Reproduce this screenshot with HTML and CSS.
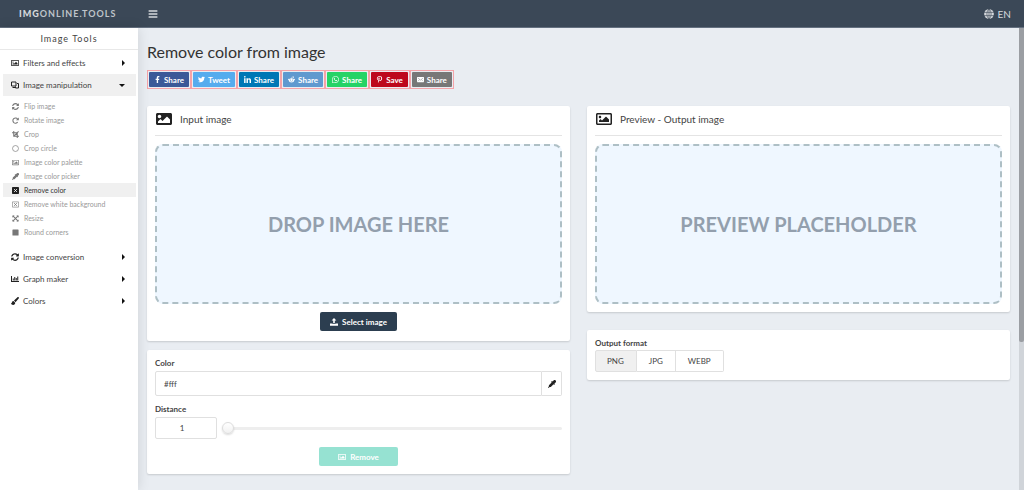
FILE: index.html
```html
<!DOCTYPE html>
<html lang="en">
<head>
<meta charset="utf-8">
<title>Remove color from image</title>
<link rel="stylesheet" href="styles.css">
</head>
<body>
<svg class="sprite" aria-hidden="true">
  <symbol id="image" viewBox="0 0 512 512"><path d="M464 64H48C21.49 64 0 85.49 0 112v288c0 26.51 21.49 48 48 48h416c26.51 0 48-21.49 48-48V112c0-26.51-21.49-48-48-48zm-6 336H54a6 6 0 0 1-6-6V118a6 6 0 0 1 6-6h404a6 6 0 0 1 6 6v276a6 6 0 0 1-6 6zM128 152c-22.091 0-40 17.909-40 40s17.909 40 40 40 40-17.909 40-40-17.909-40-40-40zM96 352h320v-80l-87.515-87.515c-4.686-4.686-12.284-4.686-16.971 0L192 304l-39.515-39.515c-4.686-4.686-12.284-4.686-16.971 0L96 304v48z"/></symbol>
  <symbol id="image-solid" viewBox="0 0 512 512"><path d="M464 448H48c-26.51 0-48-21.49-48-48V112c0-26.51 21.49-48 48-48h416c26.51 0 48 21.49 48 48v288c0 26.51-21.49 48-48 48zM112 120c-30.928 0-56 25.072-56 56s25.072 56 56 56 56-25.072 56-56-25.072-56-56-56zM64 384h384V272l-87.515-87.515c-4.686-4.686-12.284-4.686-16.971 0L208 320l-55.515-55.515c-4.686-4.686-12.284-4.686-16.971 0L64 336v48z"/></symbol>
  <symbol id="layers" viewBox="0 0 16 16"><path fill="none" stroke="currentColor" stroke-width="2" d="M1 2h9v8H1zM3 13h5M12 5h3v9H9v-3"/></symbol>
  <symbol id="sync" viewBox="0 0 512 512"><path d="M370.72 133.28C339.458 104.008 298.888 87.962 255.848 88c-77.458.068-144.328 53.178-162.791 126.85-1.344 5.363-6.122 9.15-11.651 9.15H24.103c-7.498 0-13.194-6.807-11.807-14.176C33.933 94.924 134.813 8 256 8c66.448 0 126.791 26.136 171.315 68.685L463.03 40.97C478.149 25.851 504 36.559 504 57.941V192c0 13.255-10.745 24-24 24H345.941c-21.382 0-32.09-25.851-16.971-40.971l41.75-41.749zM32 296h134.059c21.382 0 32.09 25.851 16.971 40.971l-41.75 41.75c31.262 29.273 71.835 45.319 114.876 45.28 77.418-.07 144.315-53.144 162.787-126.849 1.344-5.363 6.122-9.15 11.651-9.15h57.304c7.498 0 13.194 6.807 11.807 14.176C478.067 417.076 377.187 504 256 504c-66.448 0-126.791-26.136-171.315-68.685L48.97 471.03C33.851 486.149 8 475.441 8 454.059V320c0-13.255 10.745-24 24-24z"/></symbol>
  <symbol id="rotate" viewBox="0 0 16 16"><path fill="none" stroke="currentColor" stroke-width="2.4" d="M12.8 4.5A6 6 0 1 0 13 11.5"/><path d="M15.500 1v6.500H9z"/></symbol>
  <symbol id="crop" viewBox="0 0 16 16"><path fill="none" stroke="currentColor" stroke-width="2.4" d="M0 4h12v12M4 0v12h12M5 11L15 1"/></symbol>
  <symbol id="circle" viewBox="0 0 16 16"><circle cx="8" cy="8" r="6.800" fill="none" stroke="currentColor" stroke-width="1.500"/></symbol>
  <symbol id="dropper" viewBox="0 0 16 16"><path d="M15.200.8a2.800 2.800 0 0 0-4 0L8.800 3.200l-1-1-1.600 1.600 1.100 1.100-5.500 5.500v2.300L0 14.800 1.200 16l2.100-1.800h2.300l5.500-5.500 1.100 1.100 1.600-1.600-1-1 2.400-2.400a2.800 2.800 0 0 0 .1-4z"/></symbol>
  <symbol id="box-x" viewBox="0 0 16 16"><rect width="16" height="16" rx="1.500"/><path stroke="#fff" stroke-width="2.200" d="M5 5l6 6M11 5l-6 6"/></symbol>
  <symbol id="box-x-line" viewBox="0 0 16 16"><path fill="none" stroke="currentColor" stroke-width="1.400" d="M1 2h14v12H1z"/><path stroke="currentColor" stroke-width="2" d="M5 5l6 6M11 5l-6 6"/></symbol>
  <symbol id="resize" viewBox="0 0 16 16"><path d="M1 1h5L1 6zM15 1v5l-5-5zM1 15v-5l5 5zM15 15h-5l5-5z"/><path stroke="currentColor" stroke-width="2.400" d="M2 2l12 12M14 2L2 14"/></symbol>
  <symbol id="square" viewBox="0 0 16 16"><rect x="1" y="1" width="14" height="14" rx="1"/></symbol>
  <symbol id="chart" viewBox="0 0 16 16"><path d="M0 2h2v10h14v2H0zM3.500 7h2v4h-2zM6.500 4h2v7h-2zM9.500 6h2v5h-2zM12.500 3h2v8h-2z"/></symbol>
  <symbol id="brush" viewBox="0 0 16 16"><path d="M14.200.2c-.7 0-1.200.3-1.700.7L6 7.100l3 3.200 6.400-7.200c.4-.5.600-.9.600-1.400 0-.9-.8-1.500-1.800-1.500zM5 8.100c-2.500.1-3 1.900-3.200 3.100-.2 1.200-.7 1.700-1.800 1.500.4 2 2.300 3.100 4.300 3.100 2.500 0 4.200-1.700 4.100-4.300z"/></symbol>
  <symbol id="bars" viewBox="0 0 16 16"><path d="M1 2h14v2.400H1zM1 6.800h14v2.400H1zM1 11.600h14V14H1z"/></symbol>
  <symbol id="globe" viewBox="0 0 16 16"><circle cx="8" cy="8" r="7.800"/><path fill="none" stroke="#3b4857" stroke-width="1" d="M0 5.400h16M0 10.600h16M8 0v16M8 0C3.500 4 3.500 12 8 16M8 0c4.500 4 4.500 12 0 16"/></symbol>
  <symbol id="upload" viewBox="0 0 16 16"><path d="M8 0l4.800 5H9.600v5.500H6.400V5H3.200zM0 11h5.200v1.200h5.600V11H16v4.500H0z"/></symbol>
  <symbol id="facebook" viewBox="0 0 320 512"><path d="M279.140 288l14.220-92.660h-88.910v-60.130c0-25.350 12.420-50.060 52.240-50.060h40.420V6.260S260.430 0 225.360 0c-73.220 0-121.080 44.380-121.080 124.720v70.620H22.890V288h81.390v224h100.170V288z"/></symbol>
  <symbol id="twitter" viewBox="0 0 512 512"><path d="M459.370 151.716c.325 4.548.325 9.097.325 13.645 0 138.720-105.583 298.558-298.558 298.558-59.452 0-114.680-17.219-161.137-47.106 8.447.974 16.568 1.299 25.340 1.299 49.055 0 94.213-16.568 130.274-44.832-46.132-.975-84.792-31.188-98.112-72.772 6.498.974 12.995 1.624 19.818 1.624 9.421 0 18.843-1.300 27.614-3.573-48.081-9.747-84.143-51.980-84.143-102.985v-1.299c13.969 7.797 30.214 12.670 47.431 13.319-28.264-18.843-46.781-51.005-46.781-87.391 0-19.492 5.197-37.360 14.294-52.954 51.655 63.675 129.300 105.258 216.365 109.807-1.624-7.797-2.599-15.918-2.599-24.040 0-57.828 46.782-104.934 104.934-104.934 30.213 0 57.502 12.670 76.670 33.137 23.715-4.548 46.456-13.320 66.599-25.340-7.798 24.366-24.366 44.833-46.132 57.827 21.117-2.273 41.584-8.122 60.426-16.243-14.292 20.791-32.161 39.308-52.628 54.253z"/></symbol>
  <symbol id="linkedin" viewBox="0 0 448 448"><path d="M100.280 448H7.400V148.900h92.880zM53.790 108.100C24.090 108.100 0 83.500 0 53.800a53.790 53.790 0 0 1 107.580 0c0 29.700-24.100 54.300-53.790 54.300zM447.900 448h-92.680V302.400c0-34.700-.7-79.200-48.290-79.200-48.290 0-55.690 37.700-55.690 76.700V448h-92.780V148.900h89.080v40.800h1.300c12.400-23.500 42.690-48.300 87.880-48.300 94 0 111.280 61.900 111.280 142.300V448z"/></symbol>
  <symbol id="reddit" viewBox="0 0 16 16"><ellipse cx="8" cy="10" rx="6" ry="4.600"/><circle cx="1.900" cy="7.800" r="1.700"/><circle cx="14.100" cy="7.800" r="1.700"/><circle cx="12.500" cy="2.500" r="1.400"/><path fill="none" stroke="currentColor" stroke-width="1" d="M8 6l1-4 3 .6"/><circle cx="5.700" cy="9" r="1.200" fill="#5f99cf"/><circle cx="10.300" cy="9" r="1.200" fill="#5f99cf"/><path fill="none" stroke="#5f99cf" d="M5.500 12q2.500 1.500 5 0"/></symbol>
  <symbol id="whatsapp" viewBox="0 32 448 448"><path d="M380.900 97.100C339 55.100 283.200 32 223.900 32c-122.400 0-222 99.600-222 222 0 39.100 10.200 77.300 29.600 111L0 480l117.700-30.900c32.400 17.700 68.900 27 106.100 27h.1c122.300 0 224.100-99.600 224.100-222 0-59.300-25.200-115-67.100-157zm-157 341.600c-33.200 0-65.700-8.900-94-25.700l-6.700-4-69.800 18.300L72 359.200l-4.400-7c-18.500-29.400-28.200-63.300-28.200-98.200 0-101.700 82.800-184.500 184.600-184.500 49.300 0 95.600 19.200 130.400 54.100 34.800 34.900 56.200 81.200 56.100 130.500 0 101.800-84.900 184.600-186.600 184.600zm101.200-138.200c-5.500-2.800-32.800-16.200-37.900-18-5.100-1.900-8.800-2.800-12.500 2.800-3.700 5.600-14.300 18-17.600 21.800-3.200 3.700-6.500 4.200-12 1.400-32.600-16.300-54-29.100-75.500-66-5.700-9.800 5.700-9.100 16.300-30.300 1.800-3.700.9-6.900-.5-9.700-1.400-2.800-12.500-30.100-17.100-41.200-4.500-10.800-9.100-9.300-12.500-9.500-3.200-.2-6.900-.2-10.600-.2-3.700 0-9.700 1.400-14.800 6.900-5.100 5.600-19.400 19-19.400 46.300 0 27.300 19.900 53.700 22.600 57.400 2.800 3.700 39.100 59.700 94.800 83.800 35.200 15.200 49 16.500 66.600 13.900 10.700-1.600 32.800-13.400 37.400-26.400 4.600-13 4.600-24.100 3.200-26.400-1.300-2.500-5-3.900-10.500-6.600z"/></symbol>
  <symbol id="pinterest" viewBox="0 0 384 512"><path d="M204 6.500C101.400 6.500 0 74.900 0 185.600 0 256 39.600 296 63.600 296c9.900 0 15.600-27.600 15.600-35.400 0-9.300-23.700-29.100-23.700-67.800 0-80.400 61.200-137.400 140.400-137.400 68.100 0 118.500 38.700 118.500 109.800 0 53.100-21.300 152.700-90.300 152.700-24.900 0-46.200-18-46.200-43.800 0-37.800 26.400-74.400 26.400-113.400 0-66.200-93.900-54.200-93.900 25.800 0 16.800 2.100 35.400 9.600 50.700-13.800 59.400-42 147.900-42 209.100 0 18.900 2.700 37.500 4.500 56.400 3.400 3.800 1.700 3.400 6.900 1.500 50.400-69 48.600-82.500 71.400-172.800 12.300 23.400 44.100 36 69.300 36 106.200 0 153.900-103.500 153.900-196.800C384 71.300 298.200 6.500 204 6.500z"/></symbol>
  <symbol id="mail" viewBox="0 0 16 16"><rect y="2" width="16" height="12" rx="1"/><path fill="none" stroke="#777" stroke-width="1" d="M2 4.500l6 5 6-5M2 12l4-4M14 12l-4-4"/></symbol>
</svg>

<header class="topbar">
  <a class="logo" href="#"><b>IMG</b>ONLINE.TOOLS</a>
  <button class="menu-button" type="button" aria-label="Toggle menu"><svg class="icon icon-md"><use href="#bars"/></svg></button>
  <button class="language" type="button"><svg class="icon icon-md"><use href="#globe"/></svg>EN</button>
</header>

<div class="shell">
  <nav class="sidebar">
    <div class="sidebar-title">Image Tools</div>
    <a class="group" href="#"><svg class="icon"><use href="#image"/></svg>Filters and effects<span class="caret"></span></a>
    <a class="group open" href="#"><svg class="icon"><use href="#layers"/></svg>Image manipulation<span class="caret down"></span></a>
    <div class="tools">
      <a class="tool" href="#"><svg class="icon icon-sm"><use href="#sync"/></svg>Flip image</a>
      <a class="tool" href="#"><svg class="icon icon-sm"><use href="#rotate"/></svg>Rotate image</a>
      <a class="tool" href="#"><svg class="icon icon-sm"><use href="#crop"/></svg>Crop</a>
      <a class="tool" href="#"><svg class="icon icon-sm"><use href="#circle"/></svg>Crop circle</a>
      <a class="tool" href="#"><svg class="icon icon-sm"><use href="#image"/></svg>Image color palette</a>
      <a class="tool" href="#"><svg class="icon icon-sm"><use href="#dropper"/></svg>Image color picker</a>
      <a class="tool active" href="#"><svg class="icon icon-sm"><use href="#box-x"/></svg>Remove color</a>
      <a class="tool" href="#"><svg class="icon icon-sm"><use href="#box-x-line"/></svg>Remove white background</a>
      <a class="tool" href="#"><svg class="icon icon-sm"><use href="#resize"/></svg>Resize</a>
      <a class="tool" href="#"><svg class="icon icon-sm"><use href="#square"/></svg>Round corners</a>
    </div>
    <a class="group" href="#"><svg class="icon"><use href="#sync"/></svg>Image conversion<span class="caret"></span></a>
    <a class="group" href="#"><svg class="icon"><use href="#chart"/></svg>Graph maker<span class="caret"></span></a>
    <a class="group" href="#"><svg class="icon"><use href="#brush"/></svg>Colors<span class="caret"></span></a>
  </nav>

  <main class="content">
    <h1 class="page-title">Remove color from image</h1>
    <div class="shares">
      <span class="share-slot"><a class="share facebook" href="#"><svg class="icon icon-sm"><use href="#facebook"/></svg>Share</a></span>
      <span class="share-slot"><a class="share twitter" href="#"><svg class="icon icon-sm"><use href="#twitter"/></svg>Tweet</a></span>
      <span class="share-slot"><a class="share linkedin" href="#"><svg class="icon icon-sm"><use href="#linkedin"/></svg>Share</a></span>
      <span class="share-slot"><a class="share reddit" href="#"><svg class="icon icon-sm"><use href="#reddit"/></svg>Share</a></span>
      <span class="share-slot"><a class="share whatsapp" href="#"><svg class="icon icon-sm"><use href="#whatsapp"/></svg>Share</a></span>
      <span class="share-slot"><a class="share pinterest" href="#"><svg class="icon icon-sm"><use href="#pinterest"/></svg>Save</a></span>
      <span class="share-slot"><a class="share mail" href="#"><svg class="icon icon-sm"><use href="#mail"/></svg>Share</a></span>
    </div>

    <div class="columns">
      <div class="column">
        <section class="card">
          <h2 class="card-title"><svg class="icon icon-lg"><use href="#image-solid"/></svg>Input image</h2>
          <div class="drop">DROP IMAGE HERE</div>
          <button class="button primary" type="button"><svg class="icon"><use href="#upload"/></svg>Select image</button>
        </section>
        <section class="card">
          <label class="label" for="color">Color</label>
          <div class="color-row">
            <input class="field color-field" id="color" type="text" value="#fff">
            <button class="picker" type="button" aria-label="Pick color"><svg class="icon"><use href="#dropper"/></svg></button>
          </div>
          <label class="label" for="distance">Distance</label>
          <div class="distance-row">
            <input class="field distance-field" id="distance" type="text" value="1">
            <input class="slider" type="range" min="1" max="100" value="1" aria-label="Distance slider">
          </div>
          <button class="button accent" type="button"><svg class="icon"><use href="#image"/></svg>Remove</button>
        </section>
      </div>
      <div class="column output-column">
        <section class="card">
          <h2 class="card-title"><svg class="icon icon-lg"><use href="#image"/></svg>Preview - Output image</h2>
          <div class="drop">PREVIEW PLACEHOLDER</div>
        </section>
        <section class="card">
          <div class="label">Output format</div>
          <div class="formats">
            <button class="format selected" type="button">PNG</button>
            <button class="format" type="button">JPG</button>
            <button class="format" type="button">WEBP</button>
          </div>
        </section>
      </div>
    </div>
  </main>
  <div class="scroll-track"><div class="scroll-thumb"></div></div>
</div>
</body>
</html>
```
FILE: styles.css
```css
* { box-sizing: border-box; }
body {
  margin: 0;
  min-height: 100vh;
  display: flex;
  flex-direction: column;
  background: #e9edf2;
  color: #444;
  font: 8px/12px Lato, sans-serif;
}
a { color: inherit; text-decoration: none; }
button, input { font: inherit; color: inherit; margin: 0; }
button { border: 0; padding: 0; background: none; cursor: pointer; }
.sprite { position: absolute; width: 0; height: 0; }
.icon { width: 8px; height: 8px; flex: none; fill: currentColor; }
.icon-sm { width: 7px; height: 7px; }
.icon-md { width: 10px; height: 10px; }
.icon-lg { width: 16px; height: 16px; color: #222; }

.topbar {
  display: flex;
  align-items: center;
  height: 28px;
  padding: 0 13px 0 19px;
  background: #3b4857;
  border-bottom: 1px solid #647080;
  color: #d5d8dc;
}
.logo { width: 129px; font-size: 9px; font-weight: 700; letter-spacing: 1px; color: #bfc4ca; }
.logo b { font-weight: 900; color: #d5d8dc; }
.menu-button { display: flex; }
.language { display: flex; align-items: center; gap: 4px; margin-left: auto; font-size: 10px; }

.shell { display: flex; flex: 1; }
.sidebar {
  width: 138px;
  flex: none;
  background: #fff;
  box-shadow: 0 0 12px rgba(0, 0, 0, .12);
  z-index: 1;
}
.sidebar-title {
  height: 22px;
  margin-bottom: 2px;
  border-bottom: 1px solid #e8e8e8;
  line-height: 22px;
  font-size: 9px;
  letter-spacing: 1px;
  text-align: center;
}
.group {
  display: flex;
  align-items: center;
  gap: 4px;
  height: 22px;
  margin: 0 2px 0 3px;
  padding: 0 11px 0 8px;
  color: #444;
}
.group .icon { color: #222; }
.group.open { background: #f0f0f0; }
.caret {
  margin-left: auto;
  border: 3px solid transparent;
  border-left-color: #111;
  border-right: 0;
}
.caret.down { border: 3px solid transparent; border-top-color: #111; border-bottom: 0; }
.tools { padding: 3px 0 7px; }
.tool {
  display: flex;
  align-items: center;
  gap: 5px;
  height: 14px;
  margin: 0 2px 0 3px;
  padding-left: 9px;
  font-size: 7px;
  color: #999;
}
.tool .icon { color: #777; }
.tool.active { background: #f0f0f0; color: #333; }
.tool.active .icon { color: #222; }

.content { flex: 1; min-width: 0; padding: 13px 9px; }
.page-title { margin: 0 0 7px; font-size: 16px; line-height: 22px; font-weight: 400; color: #333; }
.shares { display: flex; margin-bottom: 17px; }
.share-slot { padding: 1px; border: 1px solid #f5a3a8; }
.share {
  display: flex;
  align-items: center;
  gap: 3px;
  height: 15px;
  padding: 0 5px;
  border-radius: 1px;
  color: #fff;
  font-weight: 700;
}
.facebook { background: #3b5998; }
.twitter { background: #55acee; }
.linkedin { background: #0077b5; }
.reddit { background: #5f99cf; }
.whatsapp { background: #25d366; }
.pinterest { background: #bd081c; }
.mail { background: #777; }

.columns { display: grid; grid-template-columns: 1fr 1fr; gap: 17px; align-items: start; }
.column { display: flex; flex-direction: column; gap: 9px; }
.output-column { gap: 18px; }
.card {
  display: flex;
  flex-direction: column;
  padding: 8px;
  background: #fff;
  border-radius: 2px;
  box-shadow: 0 1px 2px rgba(0, 0, 0, .15);
}
.card-title {
  display: flex;
  align-items: center;
  gap: 8px;
  height: 22px;
  margin: 0 0 8px;
  padding: 0 1px 11px;
  box-sizing: content-box;
  height: 10px;
  border-bottom: 1px solid #e4e4e4;
  font-size: 10px;
  font-weight: 400;
}
.drop {
  display: flex;
  align-items: center;
  justify-content: center;
  height: 160px;
  border: 2px dashed #aebfc5;
  border-radius: 8px;
  background: #eff7ff;
  color: #939fad;
  font-size: 20px;
  font-weight: 700;
}
.button {
  display: flex;
  align-items: center;
  justify-content: center;
  align-self: center;
  gap: 4px;
  height: 19px;
  border-radius: 2px;
  color: #fff;
  font-weight: 700;
}
.primary { margin: 8px 0 2px; padding: 0 10px; background: #2c3e50; }
.accent { margin-top: 8px; padding: 0 19px; background: #96e2d2; }
.label { line-height: 11px; font-weight: 700; }
.color-row { display: flex; margin: 2px 0 8px; }
.field { min-width: 0; border: 1px solid #e0e0e0; border-radius: 2px; background: #fff; outline: 0; }
.color-field { flex: 1; height: 25px; padding: 0 8px; border-radius: 2px 0 0 2px; }
.picker {
  display: flex;
  align-items: center;
  justify-content: center;
  width: 20px;
  border: 1px solid #e0e0e0;
  border-left: 0;
  border-radius: 0 2px 2px 0;
  color: #222;
}
.distance-row { display: flex; align-items: center; gap: 5px; margin-top: 2px; }
.distance-field { width: 62px; height: 22px; padding: 0 8px 0 0; text-align: center; }
.slider { flex: 1; min-width: 0; height: 14px; appearance: none; background: none; }
.slider::-webkit-slider-runnable-track { height: 3px; border-radius: 2px; background: #eee; }
.slider::-webkit-slider-thumb {
  appearance: none;
  width: 12px;
  height: 12px;
  margin-top: -5px;
  border: 1px solid #ddd;
  border-radius: 50%;
  background: linear-gradient(#fff, #f1f1f1);
  box-shadow: 0 1px 2px rgba(0, 0, 0, .15);
}
.formats { display: flex; margin-top: 1px; }
.format {
  height: 22px;
  padding: 0 12px;
  border: 1px solid #e0e0e0;
  border-left: 0;
}
.format:first-child { padding-left: 11px; border-left: 1px solid #e0e0e0; border-radius: 2px 0 0 2px; }
.format:last-child { border-radius: 0 2px 2px 0; }
.format.selected { background: #f0f0f0; }

.scroll-track { width: 5px; flex: none; background: #d0d4d9; }
.scroll-thumb { height: 68%; border-radius: 0 0 2px 2px; background: #9b9ea3; }
```
